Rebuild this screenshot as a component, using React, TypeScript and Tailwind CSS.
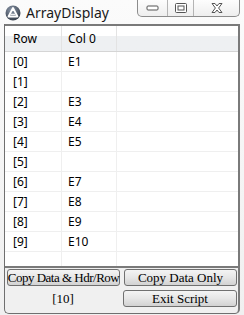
import React from "react"

const rows = ["E1", "", "E3", "E4", "E5", "", "E7", "E8", "E9", "E10"]

const AppIcon = () => (
    <svg width="16" height="16" viewBox="0 0 16 16">
        <defs>
            <radialGradient id="g" cx="0.4" cy="0.3" r="0.8">
                <stop offset="0" stopColor="#8a96a8" />
                <stop offset="1" stopColor="#2c3440" />
            </radialGradient>
        </defs>
        <circle cx="8" cy="8" r="7.5" fill="url(#g)" />
        <path d="M8 3 L12.5 11.5 L3.5 11.5 Z" fill="none" stroke="#fff" strokeWidth="1.8" strokeLinejoin="round" />
        <path d="M5.5 9.3 L10.5 9.3" stroke="#fff" strokeWidth="1.2" />
    </svg>
)

const CaptionButtons = () => (
    <div className="flex h-[17px] border border-t-0 border-[#8c8c8c] rounded-b-[5px] bg-gradient-to-b from-[#fdfdfd] to-[#eeeeee] overflow-hidden">
        <div className="w-[30px] flex items-center justify-center border-r border-[#b4b4b4]">
            <svg width="13" height="6" viewBox="0 0 13 6">
                <rect x="1" y="1" width="11" height="4" rx="1" fill="#fff" stroke="#555" strokeWidth="1" />
            </svg>
        </div>
        <div className="w-[26px] flex items-center justify-center border-r border-[#b4b4b4]">
            <svg width="12" height="10" viewBox="0 0 12 10">
                <rect x="0.5" y="0.5" width="11" height="9" rx="1" fill="#fff" stroke="#555" />
                <rect x="3" y="3" width="6" height="4" fill="#fff" stroke="#555" />
            </svg>
        </div>
        <div className="w-[45px] flex items-center justify-center">
            <svg width="12" height="10" viewBox="0 0 12 10">
                <path d="M1 0.5 L4 0.5 L6 3 L8 0.5 L11 0.5 L7.6 5 L11 9.5 L8 9.5 L6 7 L4 9.5 L1 9.5 L4.4 5 Z" fill="#fff" stroke="#555" strokeLinejoin="round" />
            </svg>
        </div>
    </div>
)

const WinButton = ({ label, tight }: { label: string; tight?: boolean }) => (
    <button className={`h-[17px] flex-1 min-w-0 whitespace-nowrap border border-[#707070] rounded-[3px] bg-gradient-to-b from-[#f4f4f4] via-[#e6e6e6] to-[#d2d2d2] text-[13px] leading-none text-black font-['Liberation_Serif',serif] flex items-center justify-center ${tight ? "tracking-[-0.5px]" : ""}`}>
        {label}
    </button>
)

export default function App() {
    return (
        <div className="w-[244px] h-[315px] bg-gradient-to-b from-[#fbfbfb] to-[#f0f0f0] flex flex-col font-['Noto_Sans',sans-serif] text-black">
            <div className="h-[24px] flex items-start shrink-0">
                <div className="pl-[5px] pt-[5px]">
                    <AppIcon />
                </div>
                <div className="ml-[5px] mt-[4px] text-[14px] leading-[17px] text-[#1a1a1a]">ArrayDisplay</div>
                <div className="ml-auto mr-[4px]">
                    <CaptionButtons />
                </div>
            </div>

            <div className="mx-[4px] w-[236px] h-[290px] border-l border-r-2 border-b border-l-[#6f6f6f] border-r-[#7a7a7a] border-b-[#6f6f6f] rounded-b-[5px] bg-[#f0f0f0] flex flex-col">
                <div className="h-[244px] border-t-2 border-b-2 border-[#7a7a7a] bg-white flex flex-col text-[12px]">
                    <div className="h-[26px] flex border-b border-[#d5d5d5] bg-gradient-to-b from-white from-40% to-[#eef0f2] to-40% shrink-0">
                        <div className="w-[57px] border-r border-[#e3e3e3] pl-[8px] flex items-center">Row</div>
                        <div className="w-[55px] border-r border-[#e3e3e3] pl-[6px] flex items-center">Col 0</div>
                        <div className="flex-1" />
                    </div>
                    {rows.map((v, i) => (
                        <div key={i} className="h-[20px] flex border-b border-[#efefef] shrink-0">
                            <div className="w-[57px] border-r border-[#efefef] pl-[8px] flex items-center">[{i}]</div>
                            <div className="w-[55px] border-r border-[#efefef] pl-[6px] flex items-center">{v}</div>
                            <div className="flex-1" />
                        </div>
                    ))}
                    <div className="flex-1 flex">
                        <div className="w-[57px] border-r border-[#efefef]" />
                        <div className="w-[55px] border-r border-[#efefef]" />
                    </div>
                </div>

                <div className="flex flex-col gap-[4px] pl-[2px] pr-[1px] pt-[1px]">
                    <div className="flex gap-[4px]">
                        <WinButton label="Copy Data & Hdr/Row" tight />
                        <WinButton label="Copy Data Only" />
                    </div>
                    <div className="flex gap-[4px]">
                        <div className="h-[17px] flex-1 flex items-center justify-center text-[13px] font-['Liberation_Serif',serif]">[10]</div>
                        <WinButton label="Exit Script" />
                    </div>
                </div>
            </div>
        </div>
    )
}
